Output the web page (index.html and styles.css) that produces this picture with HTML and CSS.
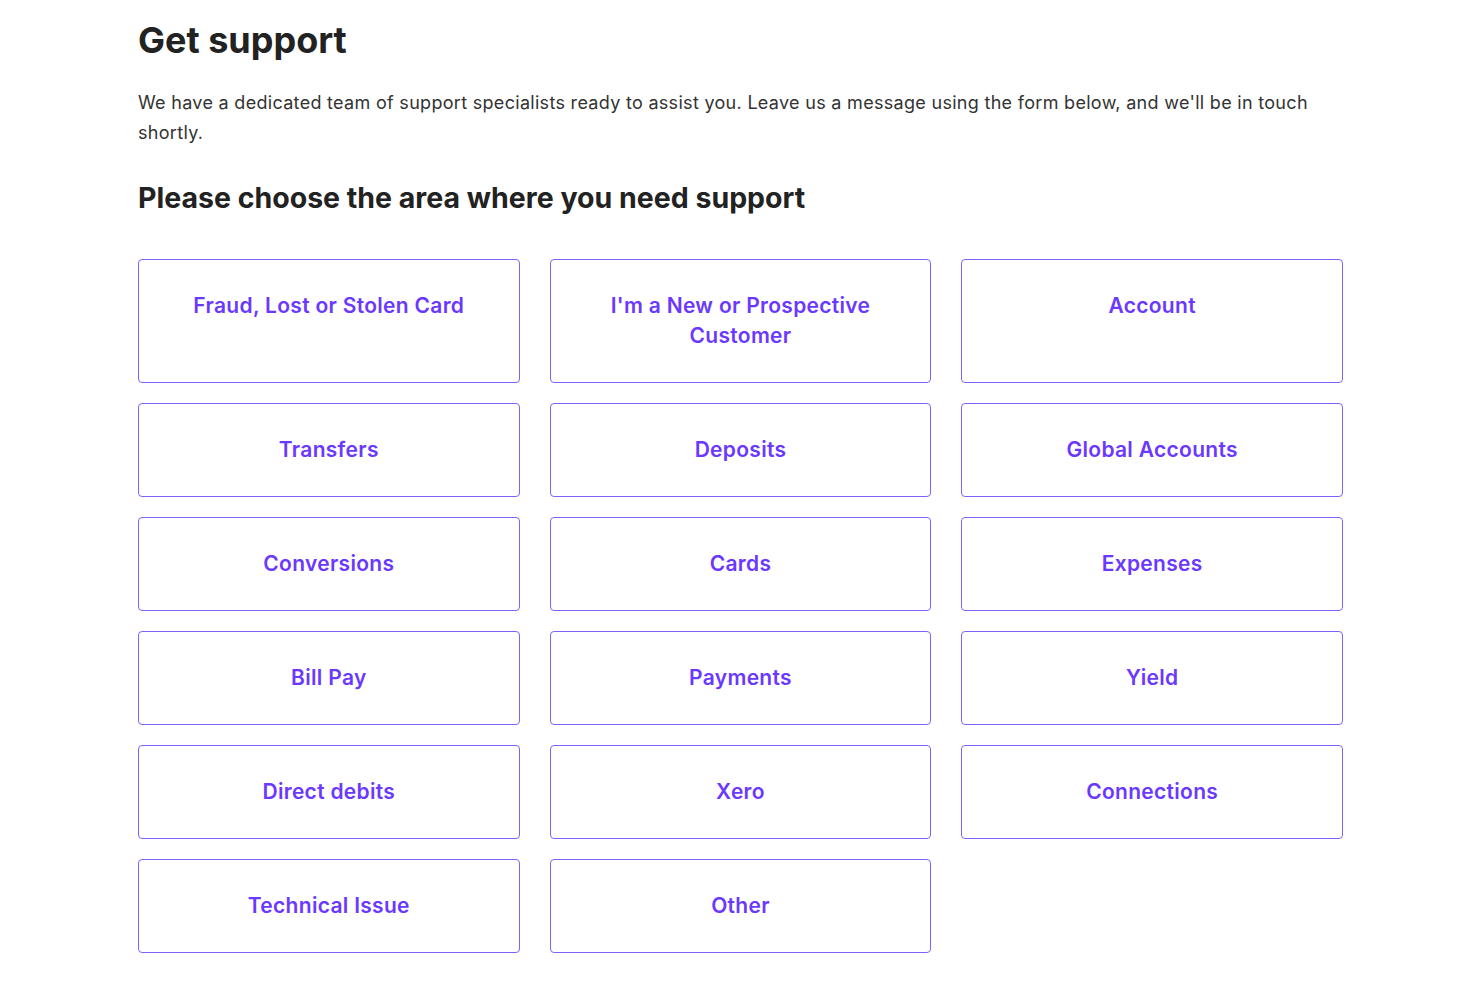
FILE: index.html
```html
<!DOCTYPE html>
<html lang="en">
<head>
    <meta charset="UTF-8">
    <meta name="viewport" content="width=device-width, initial-scale=1.0">
    <title>Get support</title>
    <link rel="stylesheet" href="styles.css">
</head>
<body>
    <div class="page">
        <h1 class="title">Get support</h1>
        <p class="intro">We have a dedicated team of support specialists ready to assist you. Leave us a message using the form below, and we'll be in touch shortly.</p>
        <h2 class="subtitle">Please choose the area where you need support</h2>

        <!-- Support areas -->
        <div class="areas">
            <button type="button" class="area">Fraud, Lost or Stolen Card</button>
            <button type="button" class="area">I'm a New or Prospective Customer</button>
            <button type="button" class="area">Account</button>
            <button type="button" class="area">Transfers</button>
            <button type="button" class="area">Deposits</button>
            <button type="button" class="area">Global Accounts</button>
            <button type="button" class="area">Conversions</button>
            <button type="button" class="area">Cards</button>
            <button type="button" class="area">Expenses</button>
            <button type="button" class="area">Bill Pay</button>
            <button type="button" class="area">Payments</button>
            <button type="button" class="area">Yield</button>
            <button type="button" class="area">Direct debits</button>
            <button type="button" class="area">Xero</button>
            <button type="button" class="area">Connections</button>
            <button type="button" class="area">Technical Issue</button>
            <button type="button" class="area">Other</button>
        </div>
    </div>
</body>
</html>
```

FILE: styles.css
```css
body {
    font-family: "Inter", "Liberation Sans", sans-serif;
    background: #ffffff;
    color: #2b2b2b;
    margin: 0;
}
.page {
    width: 1205px;
    padding: 18px 0 0 138px;
}
.title {
    margin: 0;
    font-size: 36px;
    line-height: 44px;
    font-weight: 700;
    color: #222222;
}
.intro {
    margin: 26px 0 0;
    font-size: 18px;
    line-height: 30px;
    letter-spacing: 0.3px;
    color: #333333;
}
.subtitle {
    margin: 32px 0 0;
    font-size: 28.5px;
    line-height: 36px;
    font-weight: 700;
    color: #222222;
}
.areas {
    display: grid;
    grid-template-columns: repeat(3, 1fr);
    column-gap: 30px;
    row-gap: 20px;
    margin-top: 43px;
}
.area {
    background: #ffffff;
    border: 1px solid #8260ff;
    border-radius: 4px;
    padding: 31px 40px;
    font-family: inherit;
    font-size: 21px;
    line-height: 30px;
    font-weight: 600;
    letter-spacing: 0.3px;
    color: #6b38ff;
    text-align: center;
    display: flex;
    justify-content: center;
    align-items: flex-start;
    cursor: pointer;
}
.area:hover {
    background: #f6f2ff;
}
```
